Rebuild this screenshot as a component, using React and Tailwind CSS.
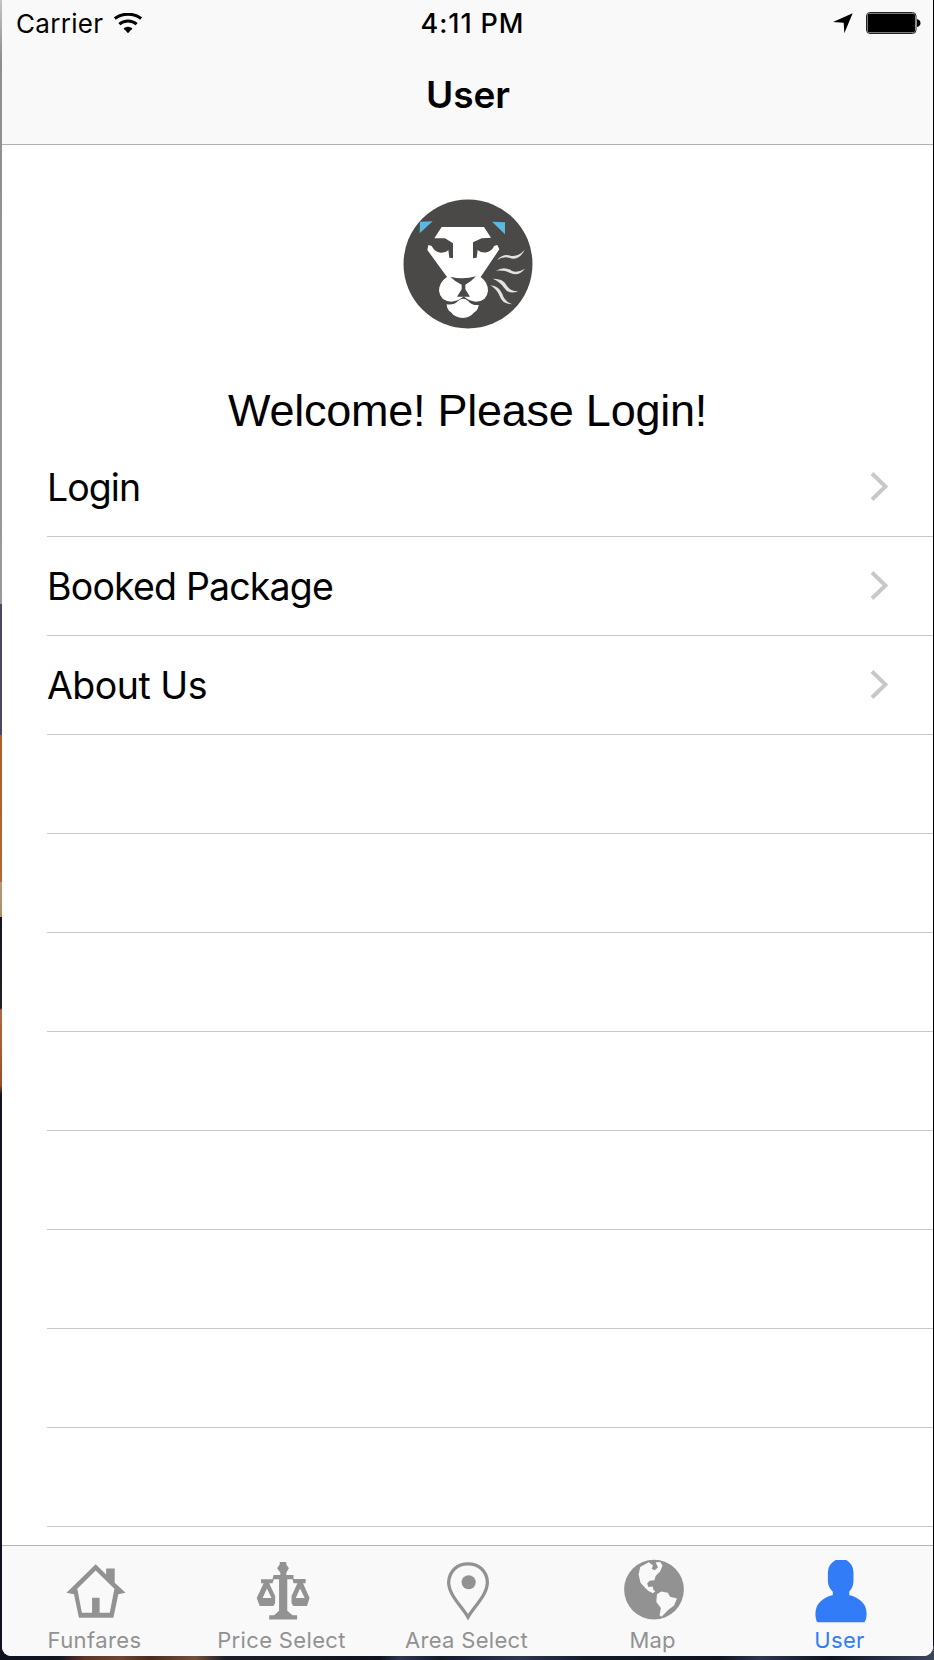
import React from "react";

const GRAY = "#929292";

function WifiIcon() {
  return (
    <svg className="h-[22px] w-[30px]" viewBox="0 0 90 66" fill="none">
      <path d="M5.500 16.500Q22 3.500 45 3.500T84.500 16.500" stroke="#000" strokeWidth="9" />
      <path d="M19 33.500Q30 24 45 24T71 33.500" stroke="#000" strokeWidth="9" />
      <path d="M32 46Q37.500 41.500 45 41.500T58 46Q57 50 53 52L45 61L37 52Q33 50 32 46Z" fill="#000" />
    </svg>
  );
}

function Lion() {
  return (
    <svg className="h-[150px] w-[155px]" viewBox="0 0 465 450">
      <circle cx="234" cy="222" r="193.500" fill="#4b4947" />
      <path d="M90 95L128 94L89 130Z M306 95L345 97V133Z" fill="#5bb8e0" />
      <path
        fill="#fff"
        d="M155 111H282L303 143L275 145L249 157V205L260 203L263 180Q275 190 290 187Q308 181 312 168L322 165L328 178L272 261Q294 277 294 302Q291 334 257 335Q236 334 221 319Q207 334 184 335Q150 332 147 302Q148 276 171 261L112 180L115 165L125 168Q134 186 152 188Q168 188 175 180L178 203L189 205V160L165 145H133Z"
      />
      <path d="M181 260Q218 270 258 259Q246 273 226 284V298L240 320H201L215 298V284Q195 275 181 260Z" fill="#4b4947" />
      <path d="M170 343Q192 346 205 332Q219 320 234 332Q245 347 266 345Q265 361 253 367Q239 384 219 384Q194 383 183 367Q171 361 170 343Z" fill="#fff" />
      <path
        fill="#e2e2e0"
        d="M321 210Q341 189 361 197Q383 202 404 179Q391 208 366 206Q342 196 321 210Z M318 242Q342 227 365 242Q381 250 405 236Q386 259 363 250Q344 239 318 242Z M308 266Q339 265 349 285Q359 304 385 303Q357 316 342 293Q328 273 308 266Z M301 286Q327 288 337 312Q343 334 367 343Q337 343 329 318Q320 297 301 286Z"
      />
    </svg>
  );
}

function HomeIcon() {
  return (
    <svg className="h-[66px] w-[66px]" viewBox="187 87 198 198" fill={GRAY}>
      <path fillRule="evenodd" d="M285 103L317 134V116H343V159L376 190L354 194L339 266H234L219 194L196 190ZM285 122L229 178L243 251H274V205H297V251H328L342 178Z" />
    </svg>
  );
}

function ScalesIcon() {
  return (
    <svg className="h-[66px] w-[66px]" viewBox="752 88 198 198" fill={GRAY}>
      <path d="M841 97H861V105L869 116L861 130V137H883V149H920V162H912L932 207L924 231H882L877 222V201L895 162H883L880 150H864V246L880 259H894V272H809V259H824L839 246V150H823L819 162H809L827 201V222L822 231H780L771 207L792 162H784V150H819L822 137H843V130L833 116L841 105Z" />
      <path d="M802 178L789 207H816ZM903 178L890 207H917Z" fill="#f9f9f9" />
    </svg>
  );
}

function PinIcon() {
  return (
    <svg className="h-[66px] w-[66px]" viewBox="226 87 198 198">
      <path d="M325 264C308 233 266 197 266 158C268 122 293 102 325 102S383 122 384 158C384 197 342 233 325 264Z" fill="none" stroke={GRAY} strokeWidth="10" />
      <circle cx="327" cy="158" r="21.500" fill={GRAY} />
    </svg>
  );
}

function GlobeIcon() {
  return (
    <svg className="h-[66px] w-[66px]" viewBox="783 87 198 198">
      <circle cx="882" cy="180" r="91" fill={GRAY} />
      <path
        fill="#f9f9f9"
        d="M840 111L866 97L879 107L875 117L884 121L894 113L887 97L901 96L908 107L901 124L887 139L883 152L868 153L861 162L865 172L878 171L880 181L886 185L879 191L864 184L854 174L841 159L835 134ZM891 194L904 186L924 190L931 202L952 207L943 229L925 242L905 263L899 258L903 236L889 218Z"
      />
    </svg>
  );
}

function PersonIcon() {
  return (
    <svg className="h-[66px] w-[66px]" viewBox="264 116 198 198">
      <path d="M347 119H379Q401 132 401 156V183Q401 201 388 216V226Q441 241 441 283Q441 301 434 309H291Q285 301 285 283Q285 241 338 226V216Q323 201 323 183V156Q323 132 347 119Z" fill="#327df7" />
    </svg>
  );
}

const rows = [
  { label: "Login", text: "tracking-[-0.95px]" },
  { label: "Booked Package", text: "tracking-[-0.82px]" },
  { label: "About Us", text: "tracking-[-0.5px]" },
  ...Array.from({ length: 8 }, () => ({ label: "", text: "" })),
];

const tabs = [
  { label: "Funfares", Icon: HomeIcon, box: "w-[187px]", text: "tracking-[0.4px]" },
  { label: "Price Select", Icon: ScalesIcon, box: "w-[187px]", text: "tracking-[0.35px]" },
  { label: "Area Select", Icon: PinIcon, box: "w-[183px]", text: "tracking-[0.3px]" },
  { label: "Map", Icon: GlobeIcon, box: "w-[189px]", text: "tracking-[0.1px]" },
  { label: "User", Icon: PersonIcon, box: "w-[185px]", text: "tracking-[0.3px]", active: true },
];

export default function App() {
  return (
    <div className="relative h-[1660px] w-[934px] overflow-hidden bg-[#10131f] pr-px pl-[2px] font-['Inter',sans-serif] text-black">
      <div className="absolute top-0 left-0 h-[1656px] w-[2px] bg-[linear-gradient(to_bottom,#c4c4c4_0,#8e8e8e_60px,#9a9a9a_604px,#4c4763_604px,#4c4763_735px,#b05c2b_735px,#b86634_882px,#b49a78_882px,#b08c68_917px,#17151c_917px,#241f29_1008px,#b06a42_1010px,#a04d28_1085px,#10131f_1095px)]" />
      <div className="absolute bottom-0 left-0 h-[14px] w-full bg-[linear-gradient(to_right,#10131f_0,#141722_60px,#5e3428_85px,#6e4434_120px,#4a2a24_150px,#74503c_195px,#1c1d28_225px,#10131f_380px,#2c374d_400px,#141a28_440px,#2c374d_520px,#141a28_590px,#10131f_720px,#2c374d_760px,#10131f_830px,#3c475c_934px)]" />
      <div className="absolute top-0 right-0 h-[1640px] w-px bg-black" />

      <div className="relative flex h-[1656px] w-[931px] flex-col overflow-hidden rounded-b-[9px] bg-white">
        <header className="h-[145px] shrink-0 border-b border-[#b2b2b2] bg-[#f9f9f9]">
          <div className="grid h-[46px] grid-cols-3 items-center">
            <div className="flex items-center pl-[14px]">
              <span className="w-[97px] pt-px text-[26px] leading-[46px] tracking-[0.3px] whitespace-nowrap">Carrier</span>
              <WifiIcon />
            </div>
            <div className="pt-px pl-[10px] text-center text-[27px] leading-[46px] font-medium tracking-[0.9px] whitespace-nowrap">4:11 PM</div>
            <div className="flex items-center justify-end gap-[13px] pr-[12px] pb-px">
              <svg className="h-[21px] w-[20px]" viewBox="0 0 60 63">
                <path d="M59 1L34 61L32 29L0 27Z" />
              </svg>
              <svg className="h-[22px] w-[55px]" viewBox="0 0 55 22">
                <rect x="0.500" y="0.500" width="49.500" height="21" rx="3.500" fill="#f9f9f9" stroke="#222" />
                <rect x="1.500" y="1.500" width="47.500" height="19" rx="2" />
                <path d="M51 7Q54.500 8 54.500 11T51 15Z" />
              </svg>
            </div>
          </div>
          <h1 className="pt-[2px] pl-px text-center text-[37px] leading-[94px] font-semibold">User</h1>
        </header>

        <main className="min-h-0 flex-1 overflow-hidden">
          <div className="flex h-[293px] flex-col items-center pt-[45px]">
            <Lion />
            <h2 className="mt-[46px] font-['Liberation_Sans',sans-serif] text-[45px] leading-[50px] tracking-[-0.25px] whitespace-nowrap">Welcome! Please Login!</h2>
          </div>
          <ul className="pl-[45px]">
            {rows.map(({ label, text }, i) => (
              <li key={i} className="flex h-[99px] items-center justify-between border-b border-[#c8c7cc] pr-[45px]">
                <span className={`pt-[2px] text-[37.5px] leading-[50px] whitespace-nowrap ${text}`}>{label}</span>
                {label && (
                  <svg className="h-[30px] w-[18px]" viewBox="0 0 18 30" fill="none">
                    <path d="M2 1.500L15.500 14.500L2 27.500" stroke="#c7c7cc" strokeWidth="4" />
                  </svg>
                )}
              </li>
            ))}
          </ul>
        </main>

        <nav className="flex h-[111px] shrink-0 border-t border-[#b2b2b2] bg-[#f9f9f9] pt-[13px]">
          {tabs.map(({ label, Icon, box, text, active }) => (
            <div key={label} className={`flex shrink-0 flex-col items-center ${box}`}>
              <Icon />
              <span className={`pr-[2px] text-[22px] leading-[32px] whitespace-nowrap ${text} ${active ? "text-[#327df7]" : "text-[#929292]"}`}>{label}</span>
            </div>
          ))}
        </nav>
      </div>
    </div>
  );
}
